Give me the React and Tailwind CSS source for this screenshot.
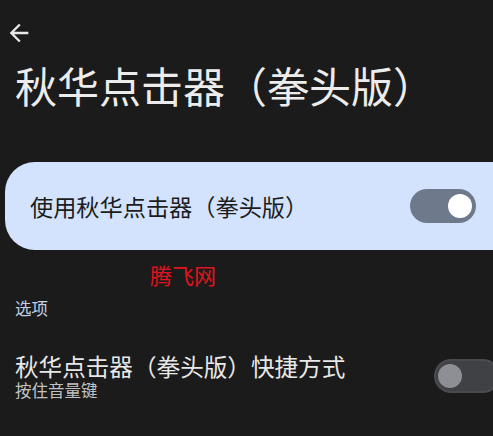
import React from "react";

const font = { fontFamily: '"Noto Sans CJK SC", "Noto Sans", sans-serif' };

function BackArrow() {
  return (
    <svg width="28" height="28" viewBox="0 0 24 24" className="block text-[#e8e8e8]" fill="currentColor">
      <path d="M20 11H7.83l5.59-5.59L12 4l-8 8 8 8 1.41-1.41L7.83 13H20v-2z" />
    </svg>
  );
}

function Toggle({ on }) {
  if (on) {
    return (
      <div className="w-[66px] h-[34px] rounded-full bg-[#6e7a8b] flex items-center justify-end pr-[4px] shrink-0">
        <div className="w-[24px] h-[24px] rounded-full bg-white" />
      </div>
    );
  }
  return (
    <div className="w-[66px] h-[34px] rounded-full bg-[#404145] border-2 border-[#4a4b4f] flex items-center pl-[2px] shrink-0">
      <div className="w-[24px] h-[24px] rounded-full bg-[#8e8f94]" />
    </div>
  );
}

export default function App() {
  return (
    <div className="w-full h-[436px] bg-[#1b1b1b] overflow-hidden" style={font}>
      <div className="pt-[19px] pl-[5px]">
        <BackArrow />
      </div>

      <h1 className="mt-[17px] ml-[15px] text-[42px] leading-[42px] text-[#ececec] whitespace-nowrap">
        秋华点击器（拳头版）
      </h1>

      <div className="mt-[56px] ml-[5px] w-[520px] h-[88px] rounded-[30px] bg-[#d3e3fd] flex items-center pl-[25px] pr-[49px]">
        <span className="text-[23.2px] leading-[26px] text-[#1c1c1c] whitespace-nowrap">使用秋华点击器（拳头版）</span>
        <div className="ml-auto">
          <Toggle on />
        </div>
      </div>

      <div className="mt-[13px] ml-[150px] text-[22px] leading-[22px] text-[#e0141e]">腾飞网</div>

      <div className="mt-[15px] ml-[15px] text-[16.5px] leading-[16.5px] text-[#c3cfe4]">选项</div>

      <div className="mt-[36px] flex items-center pl-[15px] -mr-[7px]">
        <div className="flex flex-col">
          <span className="text-[23.6px] leading-[26px] text-[#e8e8e8] whitespace-nowrap">秋华点击器（拳头版）快捷方式</span>
          <span className="mt-[1px] text-[16.5px] leading-[20px] text-[#c2c2c2]">按住音量键</span>
        </div>
        <div className="ml-auto">
          <Toggle />
        </div>
      </div>
    </div>
  );
}
